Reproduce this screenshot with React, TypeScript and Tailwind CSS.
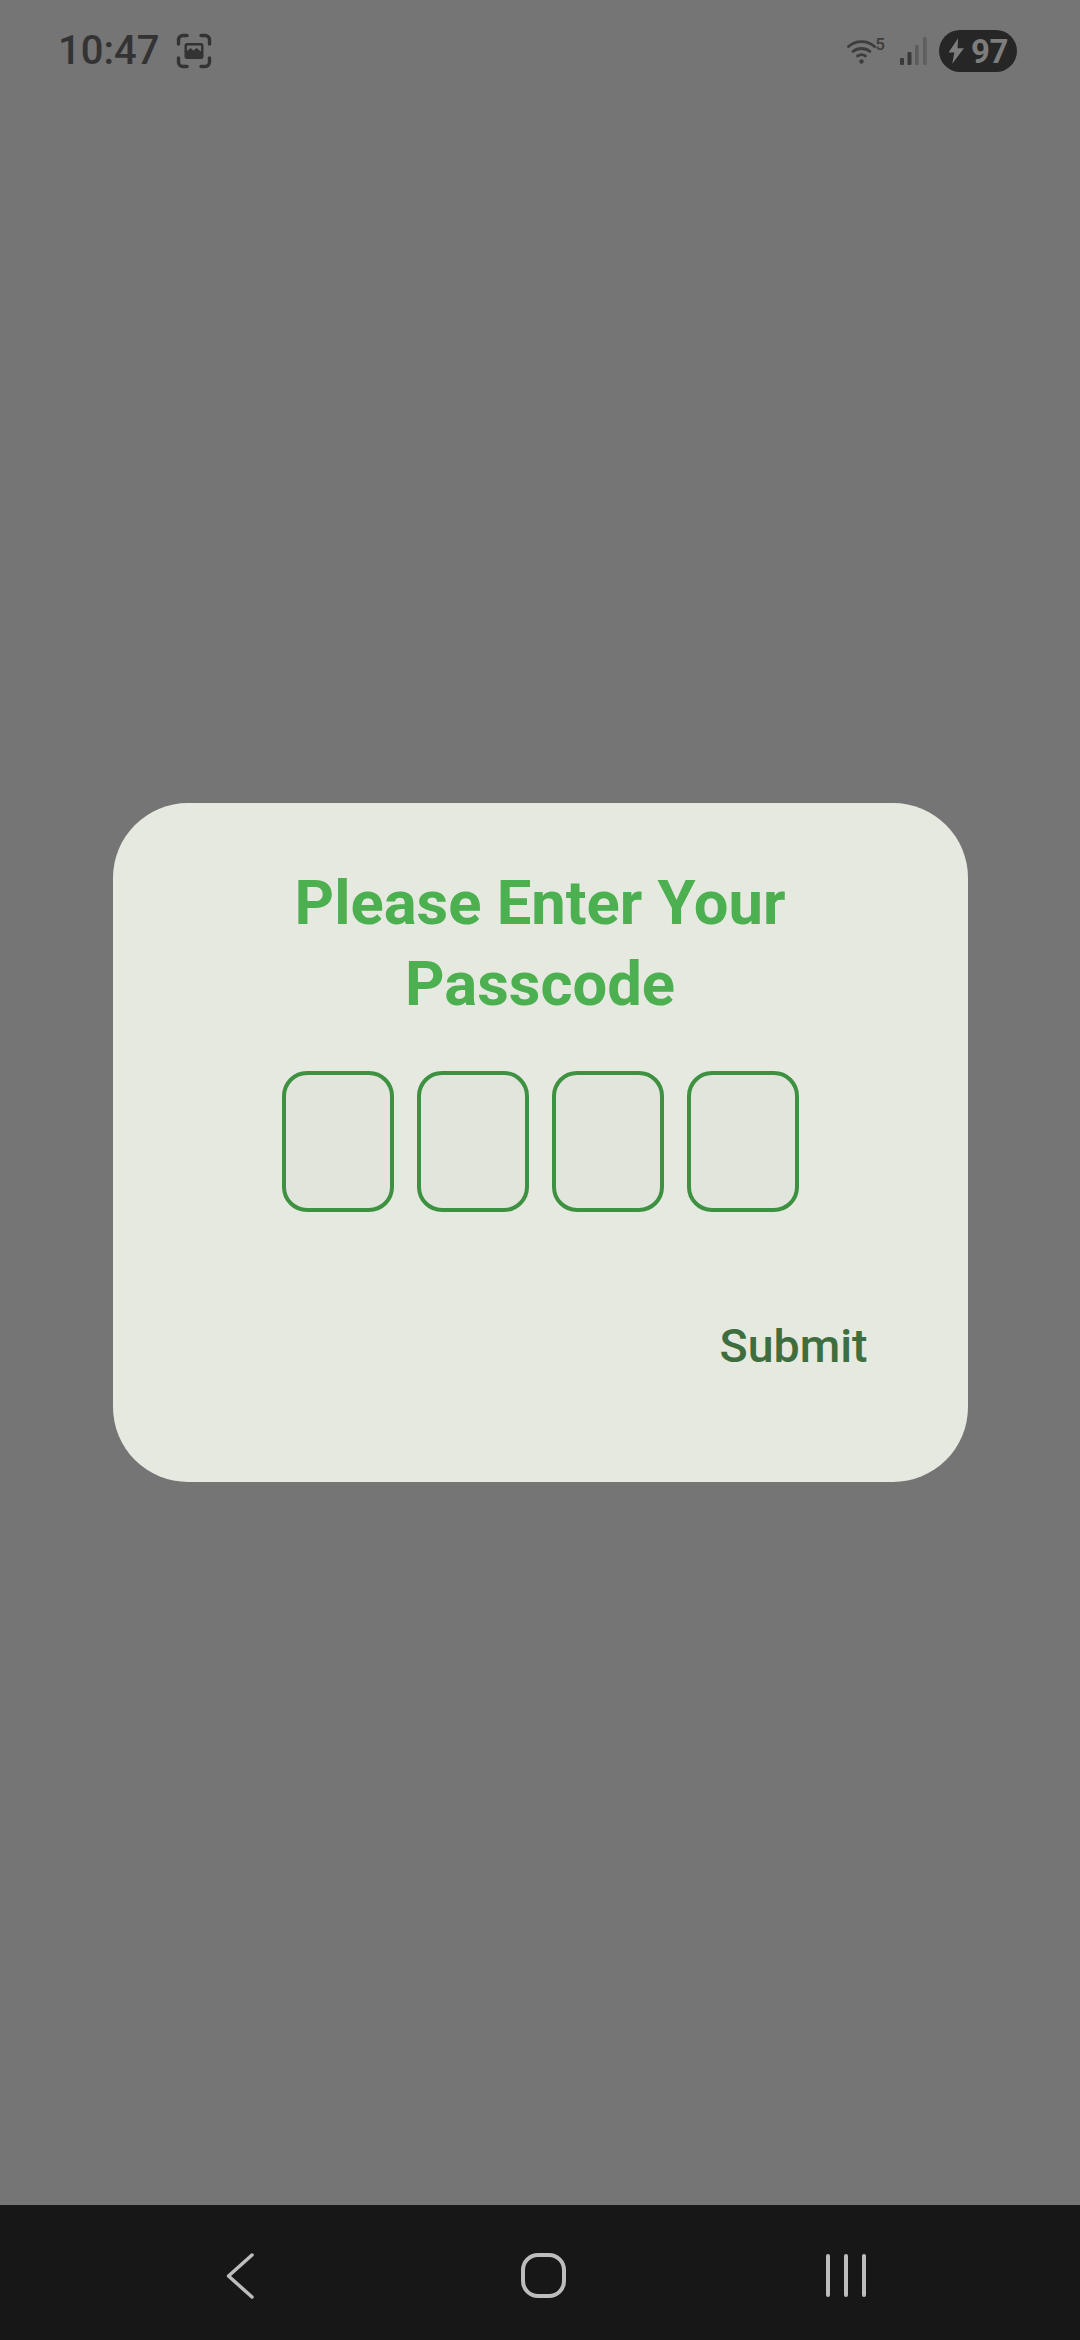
const codeBoxes = [0, 1, 2, 3];

function ScreenshotIcon() {
  return (
    <svg width="36" height="36" viewBox="0 0 36 36" fill="none" className="ml-[17px]">
      <path
        d="M2.500 11V7a4.500 4.500 0 0 1 4.500-4.500h4M25 2.500h4A4.500 4.500 0 0 1 33.500 7v4M33.500 25v4a4.500 4.500 0 0 1-4.500 4.500h-4M11 33.500H7A4.500 4.500 0 0 1 2.500 29v-4"
        stroke="#333333"
        strokeWidth="3.400"
        strokeLinecap="round"
      />
      <rect x="8.500" y="10" width="19" height="16" rx="2.500" fill="#333333" />
      <path d="M11 18l3.500-3 3 2.500 3-2.500 4.500 3.500V12.500H11z" fill="#757575" />
    </svg>
  );
}

function WifiIcon() {
  return (
    <svg width="29" height="26" viewBox="0 0 29 26" fill="none">
      <path d="M1.500 8.500C9 2 20 2 27.500 8.500" stroke="#3d3d3d" strokeWidth="2.800" strokeLinecap="round" />
      <path d="M6 13.500c5-4 12-4 17 0" stroke="#3d3d3d" strokeWidth="2.800" strokeLinecap="round" />
      <path d="M10.500 18c2.500-1.800 5.500-1.800 8 0" stroke="#3d3d3d" strokeWidth="2.800" strokeLinecap="round" />
      <circle cx="14.500" cy="23.500" r="2.200" fill="#3d3d3d" />
    </svg>
  );
}

function SignalIcon() {
  return (
    <svg width="28" height="28" viewBox="0 0 28 28" className="ml-[15px]">
      <rect x="0" y="21" width="4" height="7" rx="1" fill="#3a3a3a" />
      <rect x="7.500" y="15" width="4" height="13" rx="1" fill="#3a3a3a" />
      <rect x="15" y="8" width="3.600" height="20" rx="1" fill="#5c5c5c" />
      <rect x="23" y="0" width="3.600" height="28" rx="1" fill="#5f5f5f" />
    </svg>
  );
}

function BoltIcon() {
  return (
    <svg width="17" height="26" viewBox="0 0 16 24">
      <path d="M9.500 0L0.500 13.500h5.500L4 24l11-14.500H9z" fill="#7d7d7d" />
    </svg>
  );
}

export default function App() {
  return (
    <div className="flex h-[2340px] w-[1080px] flex-col overflow-hidden bg-[#757575] font-[family-name:Roboto,sans-serif]">
      {/* Status bar */}
      <div className="flex h-[80px] shrink-0 items-center justify-between pt-[22px] pr-[63px] pl-[58px]">
        <div className="flex items-center">
          <span className="text-[40px] leading-none font-medium text-[#333333]">10:47</span>
          <ScreenshotIcon />
        </div>
        <div className="flex items-center">
          <WifiIcon />
          <span className="-mt-[14px] -ml-[1px] text-[17px] leading-none font-medium text-[#3d3d3d]">5</span>
          <SignalIcon />
          <div className="ml-[11px] flex h-[42px] w-[78px] items-center justify-center gap-[6px] rounded-full bg-[#262626]">
            <BoltIcon />
            <span className="text-[33px] leading-none font-bold tracking-[-0.5px] text-[#7d7d7d]">97</span>
          </div>
        </div>
      </div>

      {/* Passcode dialog */}
      <div className="flex flex-1 items-center justify-center">
        <div className="flex h-[679px] w-[855px] flex-col rounded-[75px] bg-[#e6e9e0] px-[100px] pt-[60px]">
          <h1 className="text-center text-[61.500px] leading-[81px] font-bold text-[#4caf50]">
            Please Enter Your Passcode
          </h1>
          <div className="mt-[46px] flex justify-center gap-[23px]">
            {codeBoxes.map((i) => (
              <div key={i} className="h-[141px] w-[112px] rounded-[25px] border-4 border-[#3f9142] bg-[#e1e5dc]" />
            ))}
          </div>
          <div className="mt-[104px] flex justify-end">
            <button className="text-[46.500px] leading-[60px] font-medium text-[#3e6e3e]">Submit</button>
          </div>
        </div>
      </div>

      {/* Navigation bar */}
      <div className="flex h-[135px] shrink-0 items-center justify-center bg-[#171717] pt-[6px] pl-[6px]">
        <div className="flex w-[303px] justify-center">
          <svg width="30" height="48" viewBox="0 0 30 48" fill="none">
            <path d="M27 3L3.500 24L27 45" stroke="#bdbdbd" strokeWidth="3.500" strokeLinecap="round" strokeLinejoin="round" />
          </svg>
        </div>
        <div className="flex w-[303px] justify-center">
          <div className="h-[45px] w-[45px] rounded-[17px] border-4 border-[#bdbdbd]" />
        </div>
        <div className="flex w-[303px] justify-center gap-[14.500px]">
          <div className="h-[43px] w-[3.500px] rounded-full bg-[#bdbdbd]" />
          <div className="h-[43px] w-[3.500px] rounded-full bg-[#bdbdbd]" />
          <div className="h-[43px] w-[3.500px] rounded-full bg-[#bdbdbd]" />
        </div>
      </div>
    </div>
  );
}
